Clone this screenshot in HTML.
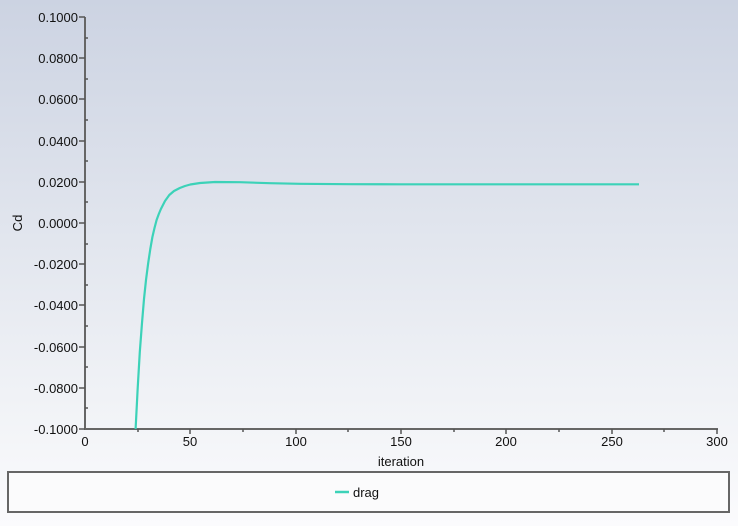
<!DOCTYPE html><html><head><style>
body{margin:0;width:738px;height:526px;background:linear-gradient(#ccd3e2,#f0f2f6 75%,#fbfbfd);font-family:"Liberation Sans",sans-serif;overflow:hidden}
svg{position:absolute;left:0;top:0}
text{font-size:13px;fill:#111}
</style></head><body>
<svg width="738" height="526">
<g stroke="#666" stroke-width="2" fill="none">
<line x1="85" y1="17" x2="85" y2="430"/>
<line x1="84" y1="429" x2="718" y2="429"/>
</g>
<g stroke="#555" stroke-width="1.5">
<line x1="79" y1="17" x2="85" y2="17"/><line x1="79" y1="58" x2="85" y2="58"/><line x1="79" y1="99" x2="85" y2="99"/><line x1="79" y1="141" x2="85" y2="141"/><line x1="79" y1="182" x2="85" y2="182"/><line x1="79" y1="223" x2="85" y2="223"/><line x1="79" y1="264" x2="85" y2="264"/><line x1="79" y1="305" x2="85" y2="305"/><line x1="79" y1="347" x2="85" y2="347"/><line x1="79" y1="388" x2="85" y2="388"/><line x1="79" y1="429" x2="85" y2="429"/>
<line x1="85" y1="38" x2="88" y2="38"/><line x1="85" y1="79" x2="88" y2="79"/><line x1="85" y1="120" x2="88" y2="120"/><line x1="85" y1="161" x2="88" y2="161"/><line x1="85" y1="202" x2="88" y2="202"/><line x1="85" y1="244" x2="88" y2="244"/><line x1="85" y1="285" x2="88" y2="285"/><line x1="85" y1="326" x2="88" y2="326"/><line x1="85" y1="367" x2="88" y2="367"/><line x1="85" y1="408" x2="88" y2="408"/>
<line x1="190" y1="429" x2="190" y2="434"/><line x1="296" y1="429" x2="296" y2="434"/><line x1="401" y1="429" x2="401" y2="434"/><line x1="506" y1="429" x2="506" y2="434"/><line x1="612" y1="429" x2="612" y2="434"/><line x1="717" y1="429" x2="717" y2="434"/>
<line x1="138" y1="429" x2="138" y2="432"/><line x1="243" y1="429" x2="243" y2="432"/><line x1="348" y1="429" x2="348" y2="432"/><line x1="454" y1="429" x2="454" y2="432"/><line x1="559" y1="429" x2="559" y2="432"/><line x1="664" y1="429" x2="664" y2="432"/>
</g>
<g text-anchor="end">
<text x="78" y="22">0.1000</text><text x="78" y="63">0.0800</text><text x="78" y="104">0.0600</text><text x="78" y="146">0.0400</text><text x="78" y="187">0.0200</text><text x="78" y="228">0.0000</text><text x="78" y="269">-0.0200</text><text x="78" y="310">-0.0400</text><text x="78" y="352">-0.0600</text><text x="78" y="393">-0.0800</text><text x="78" y="434">-0.1000</text>
</g>
<g text-anchor="middle">
<text x="85" y="446">0</text><text x="190" y="446">50</text><text x="296" y="446">100</text><text x="401" y="446">150</text><text x="506" y="446">200</text><text x="612" y="446">250</text><text x="717" y="446">300</text>
<text x="401" y="466">iteration</text>
<text transform="translate(22,223) rotate(-90)">Cd</text>
</g>
<polyline points="135.6,429 137.7,388 139.8,352 142,323 144,299 146,280 148.2,263 150.3,249 152.4,237 154.5,228 156.6,220 158.8,214 160.9,209 165,201 169.3,195 174,191 179.8,188 185,186 190.3,184.5 200,183 215,182 240,182.2 270,183.2 300,183.8 350,184.2 400,184.3 639,184.3" stroke="#3cd2b8" stroke-width="2.2" fill="none" stroke-linejoin="round"/>
<rect x="8" y="472" width="721" height="40" fill="#fbfbfc" stroke="#666" stroke-width="2"/>
<line x1="335" y1="492" x2="349" y2="492" stroke="#3cd2b8" stroke-width="2.5"/>
<text x="353" y="497">drag</text>
</svg>
</body></html>
